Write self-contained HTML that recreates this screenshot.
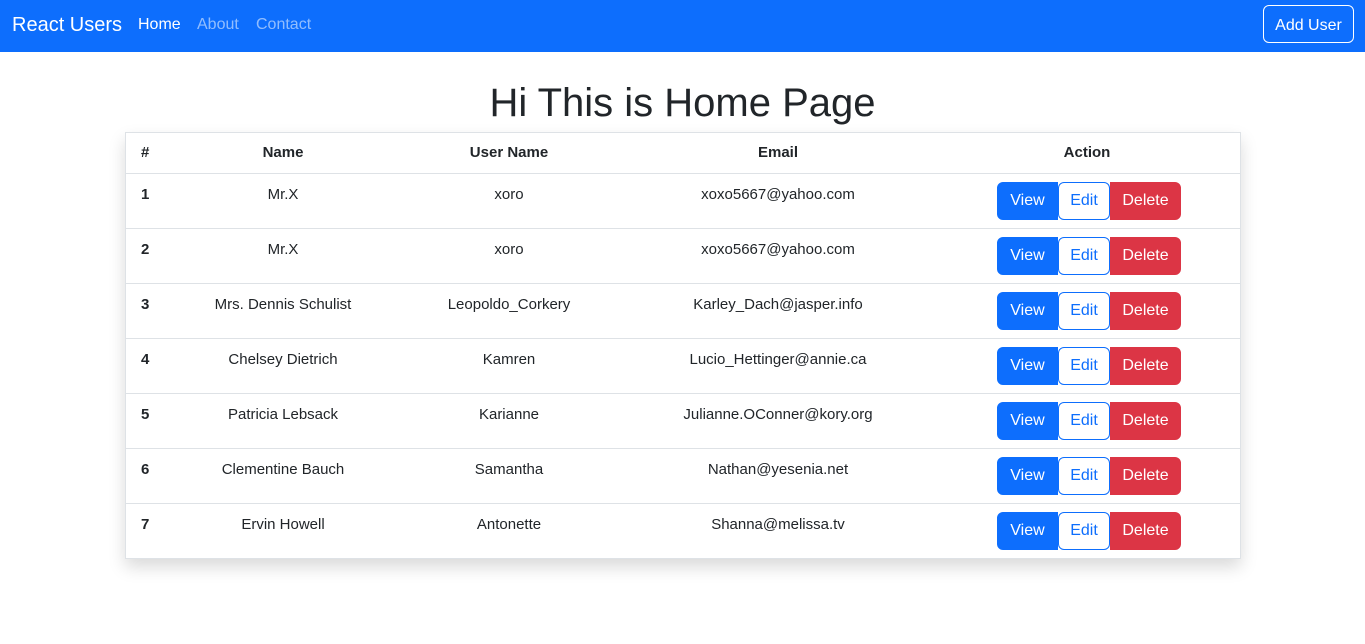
<!DOCTYPE html>
<html><head><meta charset="utf-8"><style>
*{box-sizing:border-box;margin:0;padding:0}
body{width:1365px;height:644px;background:#fff;font-family:"Liberation Sans",sans-serif;color:#212529;overflow:hidden}
nav{height:52px;background:#0d6efd;position:relative}
.brand{position:absolute;left:12px;top:14px;font-size:20px;color:#fff}
.l{position:absolute;top:16px;font-size:16px;color:rgba(255,255,255,.55)}
.add{position:absolute;right:11px;top:5px;width:91px;height:38px;border:1px solid #fff;border-radius:6px;color:#fff;font-size:16px;display:flex;align-items:center;justify-content:center;padding-top:3px}
h1{text-align:center;font-size:40px;font-weight:500;position:absolute;left:0;right:0;top:79px;line-height:48px}
.wrap{position:absolute;left:125px;top:132px;width:1116px;border:1px solid #dee2e6;box-shadow:0 8px 16px rgba(0,0,0,.15)}
table{border-collapse:collapse;width:100%;font-size:15px}
th{height:40px;font-weight:bold;text-align:center;border-bottom:1px solid #dee2e6}
td{height:55px;text-align:center;vertical-align:top;padding-top:12px;border-bottom:1px solid #dee2e6}
tr:last-child td{border-bottom:none}
td:first-child,th:first-child{text-align:left;padding-left:15px;font-weight:bold}
td.a{padding-top:8px;padding-left:4px}
.b{display:inline-block;height:38px;line-height:36px;font-size:16px;border:1px solid;vertical-align:top;text-align:center}
.v{width:61px;background:#0d6efd;border-color:#0d6efd;color:#fff;border-radius:6px 0 0 6px}
.e{width:52px;color:#0d6efd;border-color:#0d6efd;border-radius:6px}
.d{width:71px;background:#dc3545;border-color:#dc3545;color:#fff;border-radius:0 6px 6px 0}
</style></head><body>
<nav><span class="brand">React Users</span><span class="l" style="left:138px;color:#fff">Home</span><span class="l" style="left:197px">About</span><span class="l" style="left:256px">Contact</span><span class="add">Add User</span></nav>
<h1>Hi This is Home Page</h1>
<div class="wrap"><table>
<colgroup><col style="width:44px"><col style="width:226px"><col style="width:226px"><col style="width:312px"><col></colgroup>
<tr><th>#</th><th>Name</th><th>User Name</th><th>Email</th><th>Action</th></tr>
<tr><td>1</td><td>Mr.X</td><td>xoro</td><td>xoxo5667@yahoo.com</td><td class="a"><span class="b v">View</span><span class="b e">Edit</span><span class="b d">Delete</span></td></tr>
<tr><td>2</td><td>Mr.X</td><td>xoro</td><td>xoxo5667@yahoo.com</td><td class="a"><span class="b v">View</span><span class="b e">Edit</span><span class="b d">Delete</span></td></tr>
<tr><td>3</td><td>Mrs. Dennis Schulist</td><td>Leopoldo_Corkery</td><td>Karley_Dach@jasper.info</td><td class="a"><span class="b v">View</span><span class="b e">Edit</span><span class="b d">Delete</span></td></tr>
<tr><td>4</td><td>Chelsey Dietrich</td><td>Kamren</td><td>Lucio_Hettinger@annie.ca</td><td class="a"><span class="b v">View</span><span class="b e">Edit</span><span class="b d">Delete</span></td></tr>
<tr><td>5</td><td>Patricia Lebsack</td><td>Karianne</td><td>Julianne.OConner@kory.org</td><td class="a"><span class="b v">View</span><span class="b e">Edit</span><span class="b d">Delete</span></td></tr>
<tr><td>6</td><td>Clementine Bauch</td><td>Samantha</td><td>Nathan@yesenia.net</td><td class="a"><span class="b v">View</span><span class="b e">Edit</span><span class="b d">Delete</span></td></tr>
<tr><td>7</td><td>Ervin Howell</td><td>Antonette</td><td>Shanna@melissa.tv</td><td class="a"><span class="b v">View</span><span class="b e">Edit</span><span class="b d">Delete</span></td></tr>
</table></div>
</body></html>
